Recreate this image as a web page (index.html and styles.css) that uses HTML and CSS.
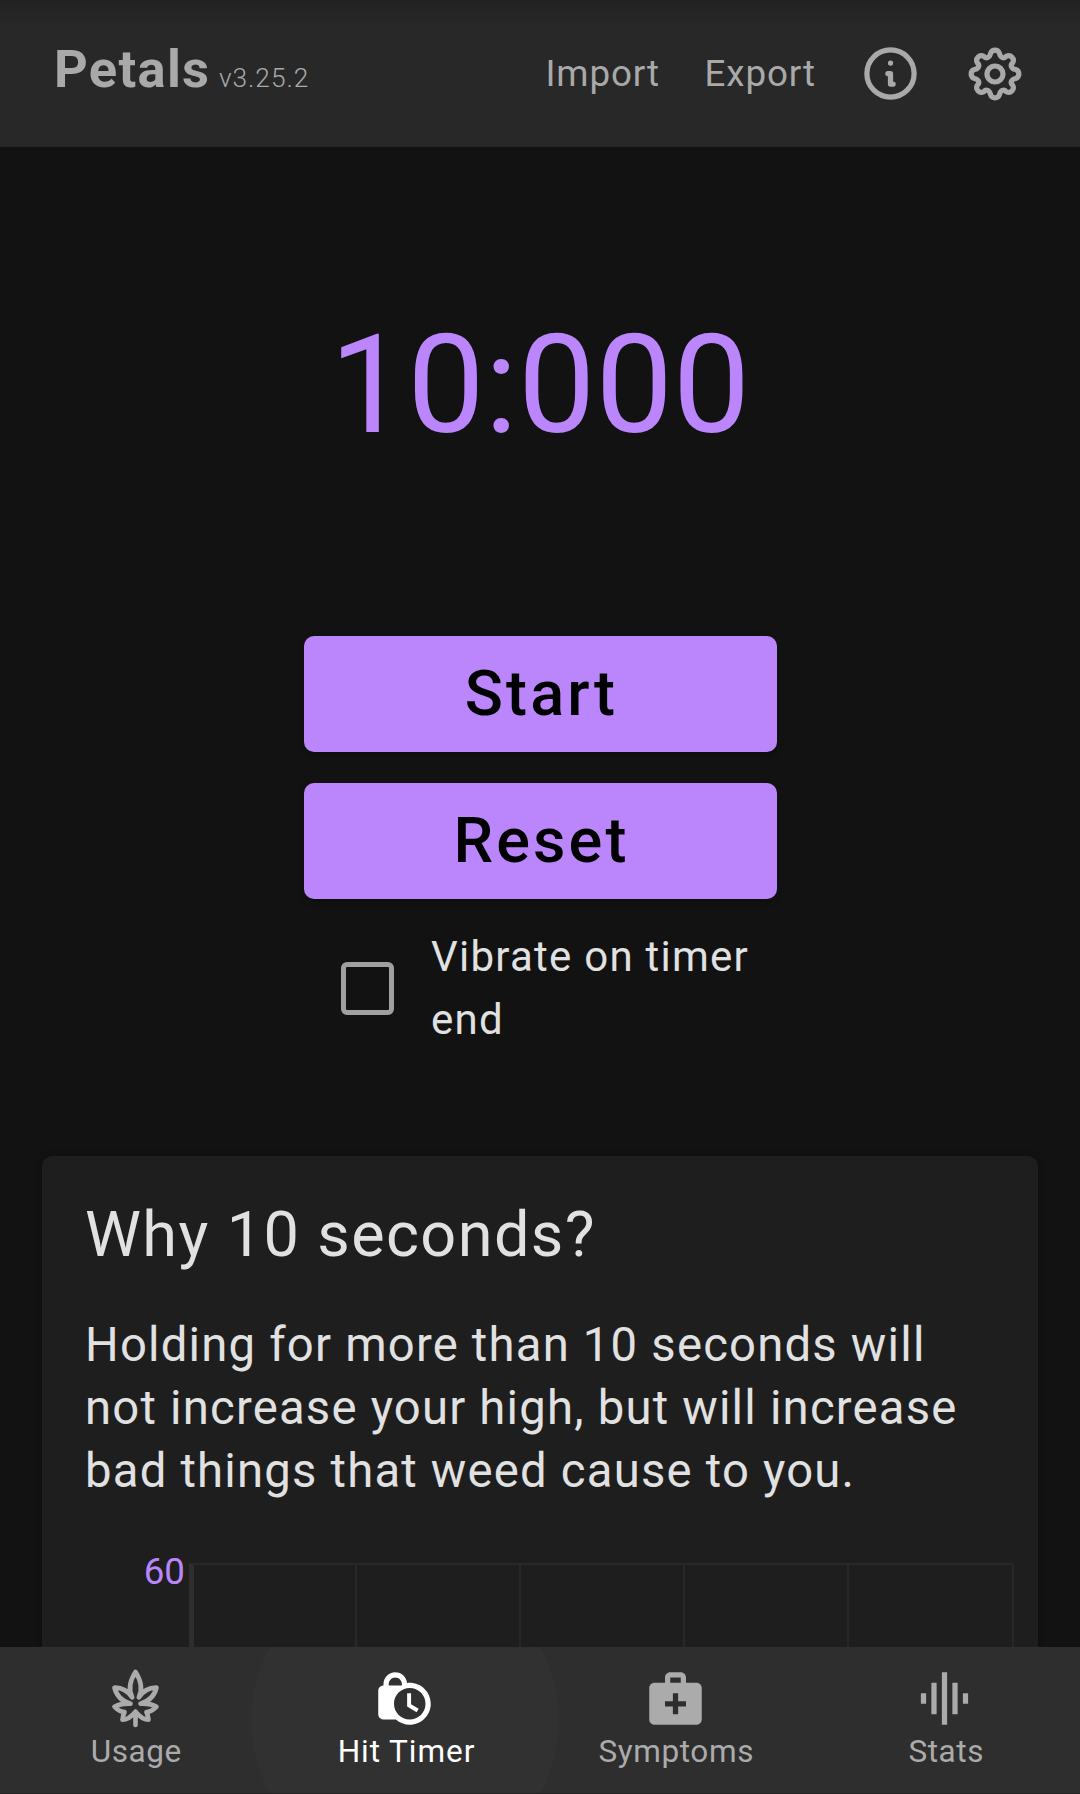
FILE: index.html
```html
<!DOCTYPE html>
<html lang="en">
<head>
<meta charset="utf-8">
<title>Petals</title>
<link rel="stylesheet" href="styles.css">
</head>
<body>
<div class="app">
  <header class="topbar">
    <div class="brand"><h1 class="brand-name">Petals</h1><span class="version">v3.25.2</span></div>
    <nav class="actions">
      <a class="action import">Import</a>
      <a class="action export">Export</a>
      <svg class="icon info" viewBox="0 0 24 24" fill="none" stroke="currentColor" stroke-width="2" stroke-linecap="round" stroke-linejoin="round">
        <circle cx="12" cy="12" r="9"/>
        <path d="M11 12h1v4h1"/><path d="M12 8h.01"/>
      </svg>
      <svg class="icon gear" viewBox="-30 -30 60 60" fill="none" stroke="currentColor" stroke-width="5.200" stroke-linejoin="round">
        <path d="M-4.5 -20.5C-3 -25 3 -25 4.500 -20.500C5.500 -16 9 -15 11.300 -17.700C15.500 -20 20 -15.500 17.700 -11.300C15 -9 16 -5.500 20.500 -4.500C25 -3 25 3 20.500 4.500C16 5.500 15 9 17.700 11.300C20 15.500 15.500 20 11.300 17.700C9 15 5.500 16 4.500 20.500C3 25 -3 25 -4.500 20.500C-5.500 16 -9 15 -11.300 17.700C-15.500 20 -20 15.500 -17.700 11.300C-15 9 -16 5.500 -20.500 4.500C-25 3 -25 -3 -20.500 -4.500C-16 -5.500 -15 -9 -17.700 -11.300C-20 -15.500 -15.500 -20 -11.300 -17.700C-9 -15 -5.500 -16 -4.500 -20.500Z"/>
        <circle r="8"/>
      </svg>
    </nav>
  </header>

  <main class="content">
    <div class="timer">10:000</div>
    <div class="controls">
      <button class="btn">Start</button>
      <button class="btn">Reset</button>
      <label class="option"><span class="checkbox"></span><span class="option-text">Vibrate on timer end</span></label>
    </div>
    <section class="card">
      <h2 class="card-title">Why 10 seconds?</h2>
      <p class="card-text">Holding for more than 10 seconds will not increase your high, but will increase bad things that weed cause to you.</p>
      <div class="chart">
        <span class="tick">60</span>
        <div class="plot"><i></i><i></i><i></i><i></i><i></i></div>
      </div>
    </section>
  </main>

  <footer class="tabs">
    <a class="tab">
      <svg class="tab-icon" viewBox="41.500 21 189 189" fill="none" stroke="currentColor" stroke-width="14" stroke-linecap="round" stroke-linejoin="round">
        <path d="M136 195V155C126 167 112 179 97 179Q98 168 103 156Q88 156 73 140Q90 130 121 131Q82 120 73 83Q105 82 126 112Q109 78 136 36Q163 78 146 112Q167 82 199 83Q190 120 151 131Q182 130 199 140Q184 156 169 156Q174 168 175 179C160 179 146 167 136 155"/>
      </svg>
      <span>Usage</span>
    </a>
    <a class="tab active">
      <svg class="tab-icon" viewBox="0 0 24 24" fill="currentColor"><path d="M14.500 14.200l2.900 1.700-.8 1.300L13 15v-5h1.500v4.200zM22 14c0 4.410-3.590 8-8 8-2.020 0-3.860-.76-5.270-2H4c-1.100 0-2-.9-2-2V9c0-1.100.9-2 2-2V6.500C4 4 6 2 8.500 2c2.340 0 4.240 1.790 4.460 4.080C13.300 6.030 13.650 6 14 6c4.410 0 8 3.590 8 8zM6 7h5V6.500C11 5.120 9.880 4 8.500 4S6 5.120 6 6.500V7zm14 7c0-3.310-2.690-6-6-6s-6 2.690-6 6 2.690 6 6 6 6-2.690 6-6z"/></svg>
      <span>Hit Timer</span>
    </a>
    <a class="tab">
      <svg class="tab-icon" viewBox="0 0 24 24" fill="currentColor"><path d="M20 6h-4V4c0-1.100-.9-2-2-2h-4c-1.100 0-2 .9-2 2v2H4c-1.100 0-2 .9-2 2v12c0 1.100.9 2 2 2h16c1.100 0 2-.9 2-2V8c0-1.100-.9-2-2-2zM10 4h4v2h-4V4zm6 11h-3v3h-2v-3H8v-2h3v-3h2v3h3v2z"/></svg>
      <span>Symptoms</span>
    </a>
    <a class="tab">
      <svg class="tab-icon" viewBox="0 0 24 24" fill="currentColor"><path d="M7 18h2V6H7v12zm4 4h2V2h-2v20zm-8-8h2v-4H3v4zm12 4h2V6h-2v12zm4-8v4h2v-4h-2z"/></svg>
      <span>Stats</span>
    </a>
  </footer>
</div>
</body>
</html>
```
FILE: styles.css
```css
* { box-sizing: border-box; }
body { margin: 0; background: #121212; color: #e1e1e1; font-family: Roboto, sans-serif; }
h1, h2, p { margin: 0; font-weight: 400; }
.app { width: 1080px; height: 1794px; display: flex; flex-direction: column; overflow: hidden; }

.topbar { flex: none; height: 147px; padding: 0 55px 0 54px; display: flex; justify-content: space-between; background: linear-gradient(#212121, #252525 12px, #282828 30px); color: #a9a9a9; }
.brand { display: flex; align-items: baseline; height: 62px; margin-top: 38px; }
.brand-name { font-size: 52.5px; font-weight: 700; line-height: 62px; letter-spacing: 1.3px; }
.version { margin-left: 8.5px; font-size: 26.25px; font-weight: 300; letter-spacing: 1px; }
.actions { display: flex; align-items: center; }
.action { font-size: 36.75px; line-height: 44px; letter-spacing: 0.9px; }
.export { margin-left: 44.5px; }
.icon { width: 60px; height: 60px; }
.info { margin-left: 43px; width: 63px; height: 63px; }
.gear { margin-left: 43px; }

.content { flex: 1; min-height: 0; overflow: hidden; display: flex; flex-direction: column; align-items: center; }
.timer { margin-top: 157px; font-size: 137.8px; line-height: 162px; color: #bb86fc; }
.controls { width: 473px; margin-top: 170px; display: flex; flex-direction: column; gap: 31px; }
.btn { height: 116px; border: 0; border-radius: 10px; padding: 0 0 1px 3px; background: #bb86fc; color: #000; font: 500 63px/74px Roboto, sans-serif; letter-spacing: 3.1px; box-shadow: 0 3px 6px rgba(0, 0, 0, 0.25); }
.option { display: flex; align-items: center; gap: 37.5px; padding-left: 37px; margin-top: -5px; height: 126px; }
.checkbox { flex: none; width: 53px; height: 53px; border: 5px solid #a0a0a0; border-radius: 6px; }
.option-text { font-size: 42px; line-height: 63px; letter-spacing: 1.25px; }

.card { flex: none; width: 996px; height: 800px; margin-top: 105px; padding: 42px 42px 42px 43px; border-radius: 10px; background: #1e1e1e; box-shadow: 0 2px 8px rgba(0, 0, 0, 0.3); }
.card-title { font-size: 63px; line-height: 74px; letter-spacing: 1.4px; }
.card-text { margin-top: 42px; font-size: 47.25px; line-height: 63px; letter-spacing: 1.2px; }
.chart { display: flex; margin: 60px -18px 0 0; }
.tick { width: 104px; text-align: right; padding-right: 4px; margin-top: -13px; font-size: 36.75px; line-height: 44px; color: #bb86fc; }
.plot { flex: 1; height: 300px; display: flex; border-top: 2px solid #282828; border-left: 5px solid #2e2e2e; }
.plot i { flex: 1; border-right: 2px solid #282828; }
.plot i:first-child { flex: 0 0 163px; }
.plot i:last-child { flex: 0 0 165px; }

.tabs { flex: none; height: 147px; display: flex; background: #2e2e2e; color: #ababab; overflow: hidden; position: relative; z-index: 1; border-bottom: 1px solid #252525; }
.tab { flex: 1; display: flex; flex-direction: column; align-items: center; padding-top: 20px; position: relative; font-size: 31.5px; line-height: 38px; letter-spacing: 0.6px; }
.tab span { margin-top: 3px; padding-left: 2.5px; }
.active { color: #fff; letter-spacing: 0.95px; }
.tab.active span { padding-left: 3px; }
/* Ripple behind the selected tab */
.active::before { content: ""; position: absolute; z-index: -1; width: 308px; height: 308px; left: -19px; top: -81px; border-radius: 50%; background: #313131; }
.tab-icon { width: 63px; height: 63px; }
.active .tab-icon, .tab:last-child .tab-icon { margin-right: 1px; }
```
